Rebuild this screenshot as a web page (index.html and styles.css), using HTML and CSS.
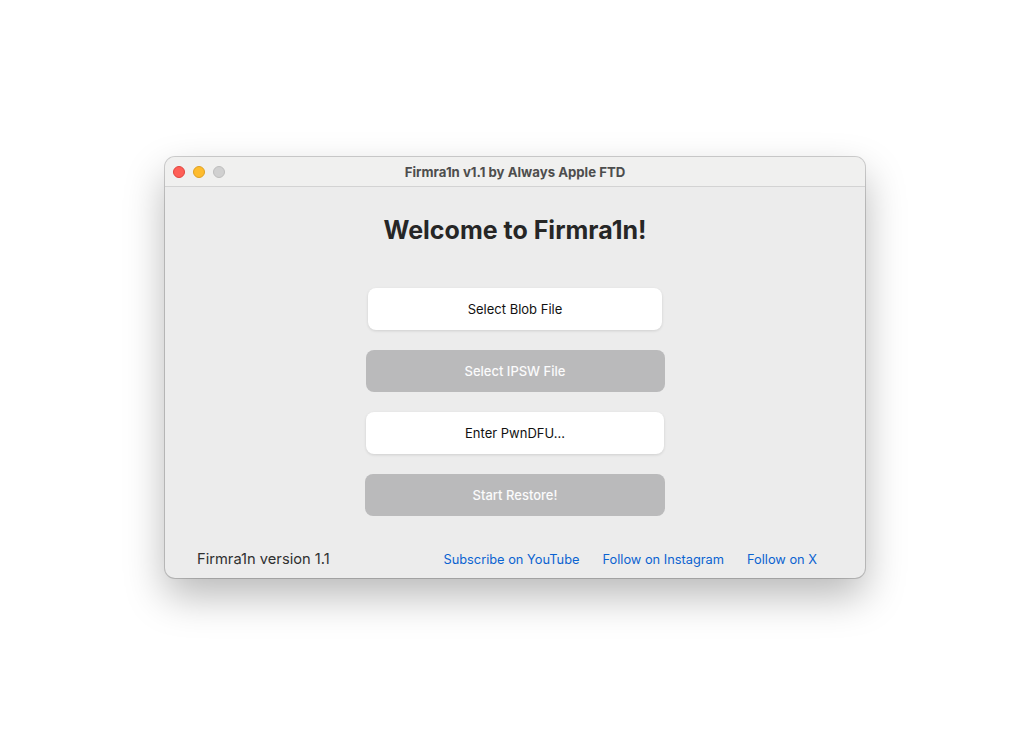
FILE: index.html
```html
<!DOCTYPE html>
<html>
<head>
<meta charset="utf-8">
<link rel="stylesheet" href="styles.css">
</head>
<body>
<div class="window">
  <div class="titlebar">
    <div class="lights">
      <span class="light red"></span>
      <span class="light yellow"></span>
      <span class="light gray"></span>
    </div>
    <div class="title">Firmra1n v1.1 by Always Apple FTD</div>
  </div>
  <div class="content">
    <h1 class="heading">Welcome to Firmra1n!</h1>
    <div class="buttons">
      <div class="btn btn-white w1">Select Blob File</div>
      <div class="btn btn-disabled w2">Select IPSW File</div>
      <div class="btn btn-white w3">Enter PwnDFU...</div>
      <div class="btn btn-disabled w4">Start Restore!</div>
    </div>
    <div class="footer">
      <span class="version">Firmra1n version 1.1</span>
      <div class="links">
        <a class="link">Subscribe on YouTube</a>
        <a class="link">Follow on Instagram</a>
        <a class="link">Follow on X</a>
      </div>
    </div>
  </div>
</div>
</body>
</html>
```
FILE: styles.css
```css
html, body {
  margin: 0;
  padding: 0;
  background: #ffffff;
}
body {
  width: 1032px;
  height: 738px;
  font-family: Inter, "Noto Sans", "Liberation Sans", sans-serif;
  padding: 157px 0 0 165px;
  box-sizing: border-box;
}
.window {
  width: 700px;
  height: 421px;
  border-radius: 10px;
  background: #ececec;
  box-shadow: 0 0 0 1px rgba(0,0,0,0.18), 0 18px 40px rgba(0,0,0,0.28);
  overflow: hidden;
  display: flex;
  flex-direction: column;
}
.titlebar {
  height: 29px;
  flex: none;
  background: #f0f0ef;
  border-bottom: 1px solid #d3d3d3;
  display: flex;
  align-items: center;
  position: relative;
}
.lights {
  display: flex;
  gap: 8px;
  padding-left: 8px;
}
.light {
  width: 12px;
  height: 12px;
  border-radius: 50%;
  box-sizing: border-box;
}
.red { background: #fe5f57; border: 0.5px solid #e0443e; }
.yellow { background: #febc2e; border: 0.5px solid #dea123; }
.gray { background: #d0d0d0; border: 0.5px solid #bdbdbd; }
.title {
  position: absolute;
  left: 0;
  right: 0;
  text-align: center;
  font-size: 13.2px;
  font-weight: 700;
  color: #4d4d4d;
  pointer-events: none;
}
.content {
  flex: 1;
  display: flex;
  flex-direction: column;
  align-items: center;
}
.heading {
  margin: 27px 0 0 0;
  font-size: 25px;
  line-height: 32px;
  font-weight: 700;
  color: #262626;
}
.buttons {
  margin-top: 42px;
  display: flex;
  flex-direction: column;
  align-items: center;
  gap: 20px;
}
.btn {
  height: 42px;
  border-radius: 8px;
  display: flex;
  align-items: center;
  justify-content: center;
  font-size: 13px;
}
.btn-white {
  background: #ffffff;
  color: #111111;
  box-shadow: 0 1px 3px rgba(0,0,0,0.12);
}
.btn-disabled {
  background: #bababb;
  color: #fbfbfb;
  font-weight: 500;
}
.w1 { width: 294px; }
.w2 { width: 299px; }
.w3 { width: 298px; }
.w4 { width: 300px; }
.footer {
  align-self: stretch;
  margin-top: 34px;
  padding: 0 48px 0 32px;
  display: flex;
  justify-content: space-between;
  align-items: center;
}
.version {
  font-size: 14.7px;
  color: #303030;
}
.links {
  display: flex;
  gap: 23px;
}
.link {
  font-size: 12.8px;
  color: #0b63d1;
}
```
